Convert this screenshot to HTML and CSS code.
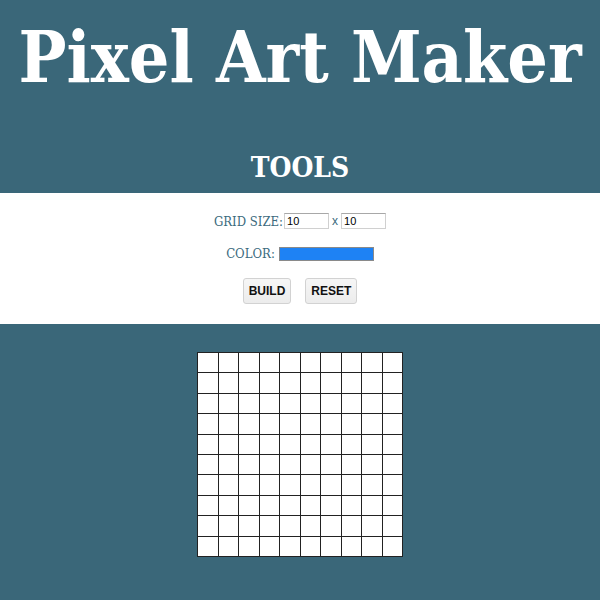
FILE: index.html
```html
<!DOCTYPE html>
<html lang="en">
<head>
<meta charset="utf-8">
<title>Pixel Art Maker</title>
<link rel="stylesheet" href="styles.css">
</head>
<body>
<header class="masthead">
  <h1 class="title">Pixel Art Maker</h1>
  <h2 class="subtitle">TOOLS</h2>
</header>
<section class="tools">
  <form class="tool-form">
    <div class="row">
      <label class="label" for="h">GRID SIZE:</label>
      <input class="num" id="h" type="number" value="10">
      <span class="times">x</span>
      <input class="num" id="w" type="number" value="10">
    </div>
    <div class="row">
      <label class="label color-label" for="c">COLOR:</label>
      <input class="swatch" id="c" type="color" value="#1e82f4">
    </div>
    <div class="row buttons">
      <button class="btn" type="button">BUILD</button>
      <button class="btn" type="reset">RESET</button>
    </div>
  </form>
</section>
<main class="canvas-area">
  <div class="grid" id="grid"></div>
</main>
<script src="script.js"></script>
</body>
</html>
```
FILE: script.js
```js
var grid = document.getElementById('grid');
for (var i = 0; i < 100; i++) {
  var c = document.createElement('div');
  c.className = 'cell';
  grid.appendChild(c);
}
```
FILE: styles.css
```css
html, body {
  margin: 0;
  padding: 0;
}
body {
  background: #3a6779;
  font-family: "DejaVu Serif Condensed", "DejaVu Serif", serif;
}
.masthead {
  padding-top: 3px;
  padding-bottom: 10px;
  text-align: center;
  color: #fff;
}
.title {
  margin: 0;
  font-size: 71px;
  line-height: 109px;
  font-weight: bold;
  white-space: nowrap;
}
.subtitle {
  margin: 41px 0 0;
  font-size: 28px;
  line-height: 30px;
  font-weight: bold;
}
.tools {
  background: #fff;
  padding: 20px 0;
}
.tool-form {
  display: flex;
  flex-direction: column;
  align-items: center;
  gap: 17px;
  margin: 0;
}
.row {
  display: flex;
  align-items: center;
  justify-content: center;
}
.label {
  color: #3b6a7d;
  font-size: 13px;
  margin-right: 1px;
}
.color-label {
  margin-right: 4px;
}
.num {
  box-sizing: border-box;
  width: 45px;
  height: 16px;
  border: 1px solid #d0d0d0;
  border-top-color: #a8a8a8;
  padding: 0 2px;
  font-family: "Liberation Sans", Arial, sans-serif;
  font-size: 11px;
  color: #000;
  -moz-appearance: textfield;
}
.num::-webkit-inner-spin-button,
.num::-webkit-outer-spin-button {
  -webkit-appearance: none;
  margin: 0;
}
.times {
  font-family: "Liberation Sans", Arial, sans-serif;
  font-size: 12px;
  color: #3b6a7d;
  margin: 0 3px;
}
.swatch {
  -webkit-appearance: none;
  appearance: none;
  box-sizing: border-box;
  width: 95px;
  height: 14px;
  padding: 0;
  border: 1px solid #8a8a8a;
  background: #1e82f4;
}
.swatch::-webkit-color-swatch-wrapper {
  padding: 0;
}
.swatch::-webkit-color-swatch {
  border: none;
}
.buttons {
  gap: 14px;
}
.btn {
  box-sizing: border-box;
  height: 26px;
  padding: 0 5px;
  border: 1px solid #d2d2d2;
  border-radius: 3px;
  background: linear-gradient(#f6f6f6, #ececec);
  font-family: "Liberation Sans", Arial, sans-serif;
  font-weight: bold;
  font-size: 12px;
  color: #111;
}
.canvas-area {
  padding-top: 28px;
  display: flex;
  justify-content: center;
}
.grid {
  display: grid;
  grid-template-columns: repeat(10, 19.5px);
  grid-auto-rows: 19.4px;
  gap: 1px;
  padding: 1px;
  background: #222;
}
.cell {
  background: #fff;
}
```
